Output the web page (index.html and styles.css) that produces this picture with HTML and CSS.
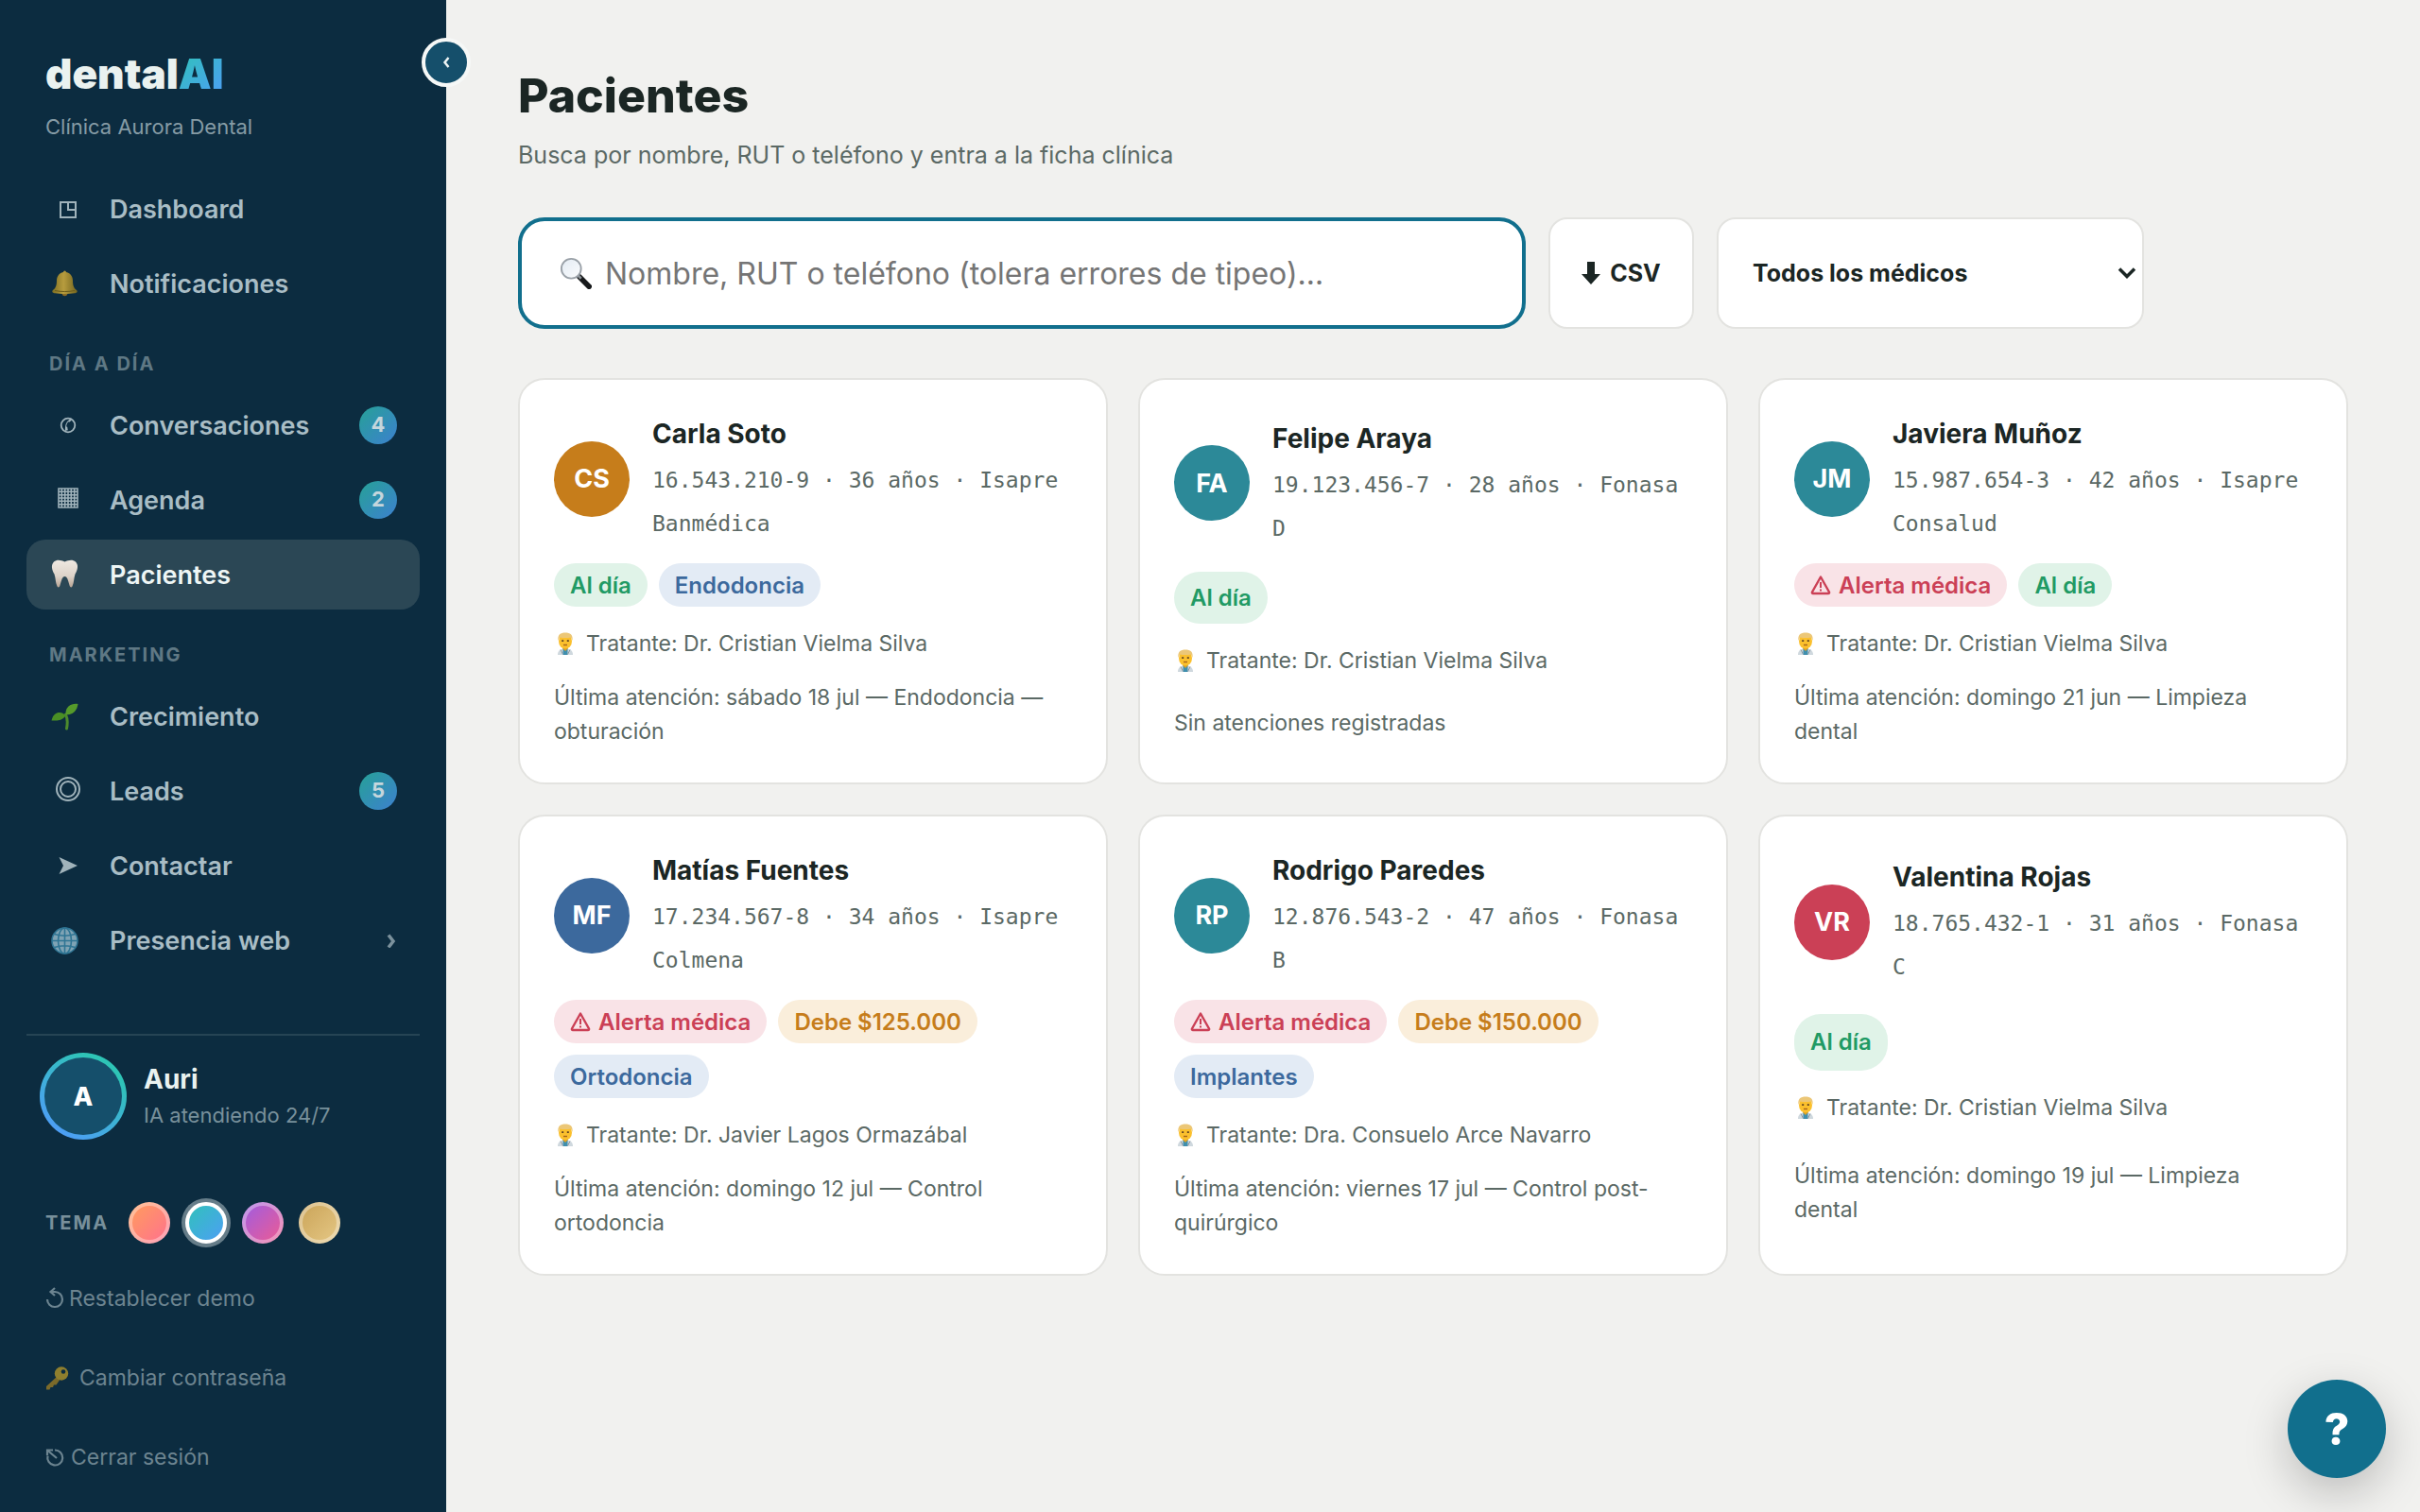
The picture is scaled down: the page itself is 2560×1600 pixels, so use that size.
FILE: index.html
```html
<!DOCTYPE html>
<html lang="es">
<head>
<meta charset="utf-8">
<meta name="viewport" content="width=device-width, initial-scale=1">
<title>Pacientes · dentalAI</title>
<link rel="stylesheet" href="styles.css">
</head>
<body>
<svg class="defs" aria-hidden="true">
  <defs>
    <linearGradient id="gold" x1="0" x2="1" y1="0" y2="0"><stop offset="0" stop-color="#7d6f22"/><stop offset=".45" stop-color="#b79c3e"/><stop offset="1" stop-color="#73651f"/></linearGradient>
    <linearGradient id="enamel" x1="0" x2="0" y1="0" y2="1"><stop offset="0" stop-color="#efe9e2"/><stop offset=".6" stop-color="#dcd2c8"/><stop offset="1" stop-color="#b9a595"/></linearGradient>
    <linearGradient id="lens" x1="0" x2="1" y1="0" y2="1"><stop offset="0" stop-color="#e3ebf3"/><stop offset="1" stop-color="#fbfcfd"/></linearGradient>
    <symbol id="doctor" viewBox="0 0 24 24">
      <path d="M4 24c0-5 3-6.500 8-6.500s8 1.500 8 6.500z" fill="#cfd8de"/>
      <path d="M9.500 17h5v7h-5z" fill="#3f8fae"/>
      <path d="M9 13h6v4l-3 3-3-3z" fill="#e0a020"/>
      <ellipse cx="12" cy="9.500" rx="7" ry="8" fill="#fbc02d"/>
      <path d="M4.500 9C3.500 2.500 7 .5 12 .5S20.500 2.500 19.500 9L18 5.500c-4 .8-8 .8-12 0z" fill="#ecc777"/>
      <path d="M8.200 9.200h2M13.800 9.200h2" stroke="#5d4022" stroke-width="1.800"/>
      <path d="M10 13.500h4" stroke="#a8641a" stroke-width="1.400"/>
      <path d="M7 18.500l2.500 5M17 18.500l-2.500 5" stroke="#8c9aa3" stroke-width="1" fill="none"/>
    </symbol>
    <symbol id="warning" viewBox="0 0 22 22">
      <path d="M11 2.500 20 18.500q.5 1.500-1 1.500H3q-1.500 0-1-1.500z" fill="none" stroke="currentColor" stroke-width="2.400" stroke-linejoin="round"/>
      <path d="M11 8v6M11 15.500v2" stroke="currentColor" stroke-width="2" fill="none"/>
    </symbol>
  </defs>
</svg>

<div class="app">
  <aside class="sidebar">
    <button class="collapse" type="button" aria-label="Contraer menú">
      <svg width="10" height="14" viewBox="0 0 10 14"><path d="M7.500 2 3.500 7l4 5" fill="none" stroke="#eef5f5" stroke-width="2.500"/></svg>
    </button>
    <div class="brand">
      <div class="logo">dental<span class="logo-ai">AI</span></div>
      <div class="clinic">Clínica Aurora Dental</div>
    </div>

    <nav class="nav">
      <a class="nav-item" href="#">
        <svg class="nav-icon" viewBox="0 0 40 40"><path d="M12 13h16v16H12zM20 13v8h8" fill="none" stroke="#a0b3bb" stroke-width="2"/></svg>
        <span>Dashboard</span>
      </a>
      <a class="nav-item" href="#">
        <svg class="nav-icon" viewBox="0 0 40 40"><circle cx="16.500" cy="30.500" r="2.800" fill="#8a6a25"/><path d="M15 8a1.500 1.500 0 0 1 3 0c5 1 7 5 7 9 0 6 1.500 8 4.500 10.500.8 2-1 2.500-2.500 2.800-6 1-15 1-21 0C4.500 30 2.700 29.500 3.500 27.500 6.500 25 8 23 8 17c0-4 2-8 7-9z" fill="url(#gold)"/><path d="M6 27.500c6 1.400 15 1.400 21 0" stroke="#6a5c1c" stroke-width="1" fill="none"/></svg>
        <span>Notificaciones</span>
      </a>

      <h2 class="nav-label">DÍA A DÍA</h2>
      <a class="nav-item" href="#">
        <svg class="nav-icon" viewBox="0 0 40 40"><circle cx="20" cy="20" r="7.300" fill="none" stroke="#a0b3bb" stroke-width="1.800"/><path d="M22.500 13.500c-4 1.500-6 6-5.500 12.500l2.800-.8-.6-3.400-1-.2c0-2 .8-4 2-5.400l1 .6 2.600-2z" fill="#a0b3bb"/></svg>
        <span>Conversaciones</span><span class="count">4</span>
      </a>
      <a class="nav-item" href="#">
        <svg class="nav-icon" viewBox="0 0 40 40"><path d="M10 8h20v20H10zM13.300 8v20M16.700 8v20M20 8v20M23.300 8v20M26.700 8v20M10 11.300h20M10 14.700h20M10 18h20M10 21.300h20M10 24.700h20" fill="none" stroke="#a0b3bb" stroke-width="1.600"/></svg>
        <span>Agenda</span><span class="count">2</span>
      </a>
      <a class="nav-item active" href="#" aria-current="page">
        <svg class="nav-icon" viewBox="0 0 40 40"><path d="M16.500 6.500C20 5 24.500 3.500 28 6.500c3.500 3.500 2 9-.5 13-1.500 4-1 9-3 13-1 1.500-2.300 1-2.800-.5-1.200-3.500-1.700-7.500-3.700-9.500-1-.8-2-.8-3 0-2 2-2.500 6-3.700 9.500-.5 1.500-1.800 2-2.800.5-2-4-1.500-9-3-13C3 15.500 1.500 10 5 6.500 8.500 3.500 13 5 16.500 6.500z" fill="url(#enamel)"/></svg>
        <span>Pacientes</span>
      </a>

      <h2 class="nav-label">MARKETING</h2>
      <a class="nav-item" href="#">
        <svg class="nav-icon" viewBox="0 0 40 40"><path d="M17.500 18c1.800 4 2 10 1 15" stroke="#4d8a2c" stroke-width="3" fill="none" stroke-linecap="round"/><path d="M17.500 19.500C15 15 5 13 2.500 24.500 8 24 12 26 17.500 19.500z" fill="#4a8f25"/><path d="M17.500 18C17 9 24 6 30.500 7 29.500 14 25 19 17.500 18z" fill="#559a2b"/></svg>
        <span>Crecimiento</span>
      </a>
      <a class="nav-item" href="#">
        <svg class="nav-icon" viewBox="0 0 40 40"><g fill="none" stroke="#a0b3bb" stroke-width="2"><circle cx="20" cy="18" r="12"/><circle cx="20" cy="18" r="8"/></g></svg>
        <span>Leads</span><span class="count">5</span>
      </a>
      <a class="nav-item" href="#">
        <svg class="nav-icon" viewBox="0 0 40 40"><path d="M10.500 11 30 20l-19.500 9 4.500-9z" fill="#a0b3bb"/></svg>
        <span>Contactar</span>
      </a>
      <a class="nav-item" href="#">
        <svg class="nav-icon" viewBox="0 0 40 40"><circle cx="16.500" cy="20.500" r="13.500" fill="#7fa3b4"/><g fill="none" stroke="#2f7594" stroke-width="1.600"><circle cx="16.500" cy="20.500" r="13.500"/><ellipse cx="16.500" cy="20.500" rx="7" ry="13.500"/><path d="M16.500 7v27M3 20.500h27M5.500 13.500q11 3.500 22 0M5.500 27.500q11-3.500 22 0"/></g></svg>
        <span>Presencia web</span>
        <svg class="nav-more" width="12" height="16" viewBox="0 0 12 16"><path d="M3 2.500 8 9 3 15.500" fill="none" stroke="#7b919c" stroke-width="3.500"/></svg>
      </a>
    </nav>

    <div class="side-foot">
      <div class="agent">
        <div class="agent-ring"><span class="agent-face">A</span></div>
        <div class="agent-text">
          <div class="agent-name">Auri</div>
          <div class="agent-status">IA atendiendo 24/7</div>
        </div>
      </div>
      <div class="themes">
        <span class="themes-label">TEMA</span>
        <button class="swatch coral" type="button" aria-label="Tema coral"></button>
        <button class="swatch ocean selected" type="button" aria-label="Tema océano"></button>
        <button class="swatch violet" type="button" aria-label="Tema violeta"></button>
        <button class="swatch sand" type="button" aria-label="Tema arena"></button>
      </div>
      <button class="foot-link" type="button">
        <svg width="20" height="24" viewBox="0 0 20 24"><path d="M2 13a8 8 0 1 0 8-8H6" fill="none" stroke="currentColor" stroke-width="2.200"/><path d="M10 1 5.500 5l4.500 4" fill="none" stroke="currentColor" stroke-width="2.200"/></svg>
        <span>Restablecer demo</span>
      </button>
      <button class="foot-link key" type="button">
        <svg width="26" height="26" viewBox="0 0 26 26"><path d="M13 11 1 22v3.500h3.500l1-2.500h2.500l1-2.500h2.500l3.500-5z" fill="#7b6a2a"/><circle cx="17" cy="8.500" r="7.200" fill="#8f7f2e"/><circle cx="19" cy="6.500" r="2.300" fill="#0c2c40"/></svg>
        <span>Cambiar contraseña</span>
      </button>
      <button class="foot-link" type="button">
        <svg width="22" height="24" viewBox="0 0 22 24"><path d="M10 4.500a8 8 0 1 1-7.500 6" fill="none" stroke="currentColor" stroke-width="2.200"/><path d="M2 10V4.500h6M2.500 5 12 13" fill="none" stroke="currentColor" stroke-width="2.200"/></svg>
        <span>Cerrar sesión</span>
      </button>
    </div>
  </aside>

  <main class="main">
    <h1 class="title">Pacientes</h1>
    <p class="subtitle">Busca por nombre, RUT o teléfono y entra a la ficha clínica</p>

    <div class="toolbar">
      <label class="search">
        <svg width="34" height="34" viewBox="0 0 36 36"><path d="m22 22 11 11" stroke="#17191b" stroke-width="6" stroke-linecap="round"/><path d="m20.500 20.500 3.500 3.500" stroke="#8d9399" stroke-width="3"/><circle cx="13" cy="13" r="11" fill="url(#lens)" stroke="#9aa1a8" stroke-width="2"/></svg>
        <input class="search-input" type="search" aria-label="Buscar paciente" placeholder="Nombre, RUT o teléfono (tolera errores de tipeo)…">
      </label>
      <button class="csv" type="button">
        <svg width="20" height="26" viewBox="0 0 20 26"><path d="M6 1h8v13h6L10 25 0 14h6z" fill="currentColor"/></svg>
        <span>CSV</span>
      </button>
      <div class="doctor-filter">
        <select class="doctor-select" aria-label="Médico"><option>Todos los médicos</option></select>
        <svg class="doctor-caret" width="20" height="14" viewBox="0 0 20 14"><path d="m2 2.500 8 8 8-8" fill="none" stroke="#1b2624" stroke-width="3.500"/></svg>
      </div>
    </div>

    <section class="cards">
      <article class="card">
        <div class="card-head"><div class="avatar amber">CS</div><div><h3 class="name">Carla Soto</h3><p class="meta">16.543.210-9 · 36 años · Isapre Banmédica</p></div></div>
        <div class="tags"><span class="tag green">Al día</span><span class="tag blue">Endodoncia</span></div>
        <p class="doctor"><svg class="doctor-icon"><use href="#doctor"/></svg>Tratante: Dr. Cristian Vielma Silva</p>
        <p class="last">Última atención: sábado 18 jul — Endodoncia — obturación</p>
      </article>
      <article class="card">
        <div class="card-head"><div class="avatar teal">FA</div><div><h3 class="name">Felipe Araya</h3><p class="meta">19.123.456-7 · 28 años · Fonasa D</p></div></div>
        <div class="tags"><span class="tag green">Al día</span></div>
        <p class="doctor"><svg class="doctor-icon"><use href="#doctor"/></svg>Tratante: Dr. Cristian Vielma Silva</p>
        <p class="last">Sin atenciones registradas</p>
      </article>
      <article class="card">
        <div class="card-head"><div class="avatar teal">JM</div><div><h3 class="name">Javiera Muñoz</h3><p class="meta">15.987.654-3 · 42 años · Isapre Consalud</p></div></div>
        <div class="tags"><span class="tag red"><svg class="tag-icon"><use href="#warning"/></svg>Alerta médica</span><span class="tag green">Al día</span></div>
        <p class="doctor"><svg class="doctor-icon"><use href="#doctor"/></svg>Tratante: Dr. Cristian Vielma Silva</p>
        <p class="last">Última atención: domingo 21 jun — Limpieza dental</p>
      </article>
      <article class="card">
        <div class="card-head"><div class="avatar navy">MF</div><div><h3 class="name">Matías Fuentes</h3><p class="meta">17.234.567-8 · 34 años · Isapre Colmena</p></div></div>
        <div class="tags"><span class="tag red"><svg class="tag-icon"><use href="#warning"/></svg>Alerta médica</span><span class="tag orange">Debe $125.000</span><span class="tag blue">Ortodoncia</span></div>
        <p class="doctor"><svg class="doctor-icon"><use href="#doctor"/></svg>Tratante: Dr. Javier Lagos Ormazábal</p>
        <p class="last">Última atención: domingo 12 jul — Control ortodoncia</p>
      </article>
      <article class="card">
        <div class="card-head"><div class="avatar teal">RP</div><div><h3 class="name">Rodrigo Paredes</h3><p class="meta">12.876.543-2 · 47 años · Fonasa B</p></div></div>
        <div class="tags"><span class="tag red"><svg class="tag-icon"><use href="#warning"/></svg>Alerta médica</span><span class="tag orange">Debe $150.000</span><span class="tag blue">Implantes</span></div>
        <p class="doctor"><svg class="doctor-icon"><use href="#doctor"/></svg>Tratante: Dra. Consuelo Arce Navarro</p>
        <p class="last">Última atención: viernes 17 jul — Control post-quirúrgico</p>
      </article>
      <article class="card">
        <div class="card-head"><div class="avatar crimson">VR</div><div><h3 class="name">Valentina Rojas</h3><p class="meta">18.765.432-1 · 31 años · Fonasa C</p></div></div>
        <div class="tags"><span class="tag green">Al día</span></div>
        <p class="doctor"><svg class="doctor-icon"><use href="#doctor"/></svg>Tratante: Dr. Cristian Vielma Silva</p>
        <p class="last">Última atención: domingo 19 jul — Limpieza dental</p>
      </article>
    </section>
  </main>
</div>
<button class="help" type="button" aria-label="Ayuda">?</button>
</body>
</html>
```
FILE: styles.css
```css
:root {
  --bg: #f1f1ef;
  --side: #0c2c40;
  --ink: #1b2624;
  --muted: #5b6965;
  --line: #e3e3e0;
  --accent: #116f8d;
}

* { box-sizing: border-box; }

body {
  margin: 0;
  background: var(--bg);
  color: var(--ink);
  font-family: Inter, "Liberation Sans", sans-serif;
}

h1, h2, h3, p { margin: 0; }

button, input, select { font: inherit; color: inherit; }
button { cursor: pointer; }

.defs { position: absolute; width: 0; height: 0; }

.app {
  display: grid;
  grid-template-columns: 472px 1fr;
  min-height: 100vh;
}

/* Sidebar */
.sidebar {
  position: relative;
  background: var(--side);
  padding: 50px 28px 16px;
}

.collapse {
  position: absolute;
  top: 40px;
  right: -26px;
  width: 52px;
  height: 52px;
  display: grid;
  place-items: center;
  padding: 0;
  border: 4px solid #f6f8f7;
  border-radius: 50%;
  background: #154f6b;
}

.brand { padding-left: 20px; }

.logo {
  font-size: 44px;
  line-height: 56px;
  font-weight: 900;
  color: #eaf2f0;
}

.logo-ai {
  background: linear-gradient(135deg, #2ec4b6, #4f9cf9);
  background-clip: text;
  -webkit-background-clip: text;
  color: transparent;
}

.clinic {
  margin-top: 12px;
  font-size: 22px;
  line-height: 32px;
  color: #859ba5;
}

.nav {
  display: flex;
  flex-direction: column;
  gap: 5px;
  margin-top: 34px;
}

.nav-item {
  display: flex;
  align-items: center;
  gap: 24px;
  height: 74px;
  padding: 0 24px;
  border-radius: 20px;
  color: #a9bdc5;
  font-size: 27px;
  font-weight: 600;
  text-decoration: none;
}

.nav-item.active { background: #2b4755; color: #eef6f5; }

.nav-icon { width: 40px; height: 40px; flex: none; }

.nav-label {
  padding: 31px 24px 11px;
  font-size: 20px;
  line-height: 24px;
  font-weight: 700;
  letter-spacing: 2px;
  color: #5f7884;
}

.count {
  width: 40px;
  height: 40px;
  margin-left: auto;
  border-radius: 50%;
  background: linear-gradient(135deg, #26a197, #3d80cf);
  color: #c5d6dc;
  font-size: 22px;
  line-height: 38px;
  font-weight: 700;
  text-align: center;
}

.nav-more { margin-left: auto; }

.side-foot {
  margin-top: 62px;
  padding-top: 18px;
  border-top: 2px solid #264454;
}

.agent {
  display: flex;
  align-items: center;
  gap: 18px;
  padding-left: 14px;
}

.agent-ring {
  width: 92px;
  height: 92px;
  padding: 5px;
  border-radius: 50%;
  background: linear-gradient(215deg, #2ec4b6 20%, #4f9cf9 90%);
}

.agent-face {
  display: grid;
  place-items: center;
  height: 100%;
  border-radius: 50%;
  background: #154f6b;
  color: #fff;
  font-size: 27px;
  font-weight: 800;
}

.agent-name {
  font-size: 28px;
  line-height: 40px;
  font-weight: 700;
  color: #eaf2f0;
}

.agent-status {
  font-size: 22px;
  line-height: 36px;
  color: #78909b;
}

.themes {
  display: flex;
  align-items: center;
  gap: 16px;
  margin: 66px 0 16px;
  padding-left: 20px;
}

.themes-label {
  width: 72px;
  font-size: 20px;
  font-weight: 700;
  letter-spacing: 2px;
  color: #78909b;
}

.swatch {
  width: 44px;
  height: 44px;
  padding: 0;
  border: 4px solid rgba(255, 255, 255, .35);
  border-radius: 50%;
  background-origin: border-box;
}

.swatch.selected { border-color: #fff; box-shadow: 0 0 0 4px #667d89; }
.coral { background-image: linear-gradient(135deg, #ff9f5a, #ff6f91); }
.ocean { background-image: linear-gradient(135deg, #2ec4b6, #4f9cf9); }
.violet { background-image: linear-gradient(135deg, #9b5de5, #f15b8f); }
.sand { background-image: linear-gradient(135deg, #c9a256, #e6c987); }

.foot-link {
  display: flex;
  align-items: center;
  gap: 5px;
  width: 100%;
  height: 84px;
  padding: 0 20px;
  border: 0;
  background: none;
  color: #6c8490;
  font-size: 23px;
  text-align: left;
}

.foot-link.key { gap: 10px; }

/* Main */
.main { padding: 71px 76px 76px; }

.title {
  font-size: 50px;
  line-height: 60px;
  font-weight: 800;
}

.subtitle {
  margin-top: 15px;
  font-size: 25px;
  line-height: 36px;
  color: var(--muted);
}

.toolbar {
  display: flex;
  gap: 24px;
  max-width: 1720px;
  height: 118px;
  margin-top: 48px;
}

.search {
  display: flex;
  flex: 1;
  align-items: center;
  gap: 14px;
  padding: 0 40px;
  border: 4px solid var(--accent);
  border-radius: 28px;
  background: #fff;
}

.search-input {
  flex: 1;
  min-width: 0;
  padding: 0;
  border: 0;
  outline: 0;
  background: none;
  font-size: 32px;
}

.search-input::placeholder { color: #757575; opacity: 1; }

.csv {
  display: flex;
  align-items: center;
  justify-content: center;
  gap: 10px;
  width: 154px;
  border: 2px solid var(--line);
  border-radius: 20px;
  background: #fff;
  font-size: 25px;
  font-weight: 700;
}

.doctor-filter { display: grid; width: 452px; }

.doctor-select {
  grid-area: 1 / 1;
  padding: 0 36px;
  border: 2px solid var(--line);
  border-radius: 20px;
  background: #fff;
  appearance: none;
  font-size: 25px;
  font-weight: 700;
}

.doctor-caret {
  grid-area: 1 / 1;
  place-self: center end;
  margin-right: 8px;
  pointer-events: none;
}

.cards {
  display: grid;
  grid-template-columns: repeat(3, minmax(0, 1fr));
  gap: 32px;
  margin-top: 52px;
}

.card {
  display: grid;
  gap: 19px;
  padding: 34px 36px 36px;
  border: 2px solid var(--line);
  border-radius: 28px;
  background: #fff;
}

.card-head {
  display: flex;
  align-items: center;
  gap: 24px;
}

.avatar {
  display: grid;
  flex: none;
  place-items: center;
  width: 80px;
  height: 80px;
  border-radius: 50%;
  color: #fff;
  font-size: 27px;
  font-weight: 700;
}

.amber { background: #c67d1b; }
.teal { background: #2c8998; }
.navy { background: #3c699d; }
.crimson { background: #cb4056; }

.name {
  margin-bottom: 3px;
  font-size: 28px;
  line-height: 46px;
  font-weight: 700;
}

.meta {
  font-family: "DejaVu Sans Mono", monospace;
  font-size: 23px;
  line-height: 46px;
  color: var(--muted);
}

.tags {
  display: flex;
  flex-wrap: wrap;
  gap: 12px;
}

.tag {
  display: flex;
  align-items: center;
  gap: 8px;
  min-height: 46px;
  padding: 0 17px;
  border-radius: 28px;
  font-size: 24px;
  font-weight: 600;
}

.tag-icon { width: 22px; height: 22px; }

.green { background: #e0f3e8; color: #219a64; }
.blue { background: #e3ebf5; color: #3c699d; }
.red { background: #f9e3e7; color: #cb4056; }
.orange { background: #faeedb; color: #c67d1b; }

.doctor {
  display: flex;
  align-items: center;
  align-self: start;
  gap: 10px;
  font-size: 23px;
  line-height: 40px;
  color: var(--muted);
}

.doctor-icon { width: 24px; height: 24px; }

.last {
  padding-right: 12px;
  font-size: 23px;
  line-height: 36px;
  color: var(--muted);
}

.help {
  position: fixed;
  right: 36px;
  bottom: 36px;
  width: 104px;
  height: 104px;
  border: 0;
  border-radius: 50%;
  background: var(--accent);
  box-shadow: 0 16px 48px rgba(0, 0, 0, .22);
  color: #fff;
  font-size: 46px;
  font-weight: 800;
}
```
